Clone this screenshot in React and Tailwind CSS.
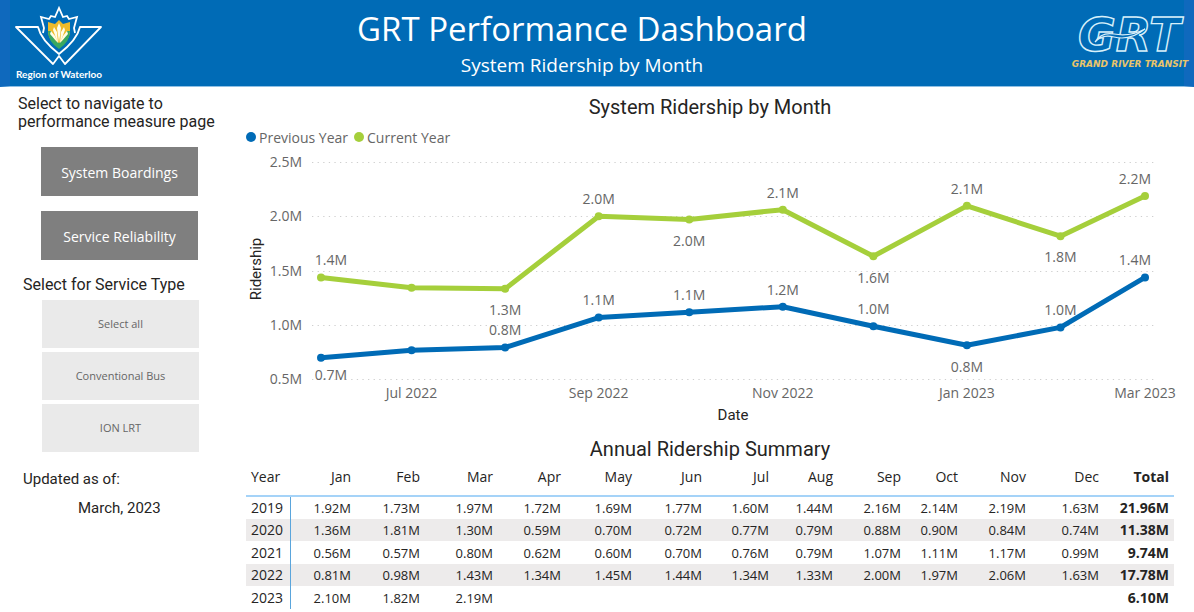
const segoe = "font-['Open_Sans','Noto_Sans',sans-serif]";
const din = "font-[Roboto,'Liberation_Sans',sans-serif]";

const months = ['Jan', 'Feb', 'Mar', 'Apr', 'May', 'Jun', 'Jul', 'Aug', 'Sep', 'Oct', 'Nov', 'Dec'];
const columnWidths = [44, 66, 69, 73, 68, 71, 70, 67, 64, 68, 57, 68, 73, 70];

const rows = [
  { year: '2019', values: ['1.92M', '1.73M', '1.97M', '1.72M', '1.69M', '1.77M', '1.60M', '1.44M', '2.16M', '2.14M', '2.19M', '1.63M'], total: '21.96M' },
  { year: '2020', values: ['1.36M', '1.81M', '1.30M', '0.59M', '0.70M', '0.72M', '0.77M', '0.79M', '0.88M', '0.90M', '0.84M', '0.74M'], total: '11.38M' },
  { year: '2021', values: ['0.56M', '0.57M', '0.80M', '0.62M', '0.60M', '0.70M', '0.76M', '0.79M', '1.07M', '1.11M', '1.17M', '0.99M'], total: '9.74M' },
  { year: '2022', values: ['0.81M', '0.98M', '1.43M', '1.34M', '1.45M', '1.44M', '1.34M', '1.33M', '2.00M', '1.97M', '2.06M', '1.63M'], total: '17.78M' },
  { year: '2023', values: ['2.10M', '1.82M', '2.19M', '', '', '', '', '', '', '', '', ''], total: '6.10M' },
];

// Days elapsed since 1 June 2022 for each plotted month.
const days = [0, 30, 61, 92, 122, 153, 183, 214, 245, 273];
const current = [1.445, 1.35, 1.34, 2.01, 1.98, 2.07, 1.64, 2.105, 1.825, 2.195];
const previous = [0.705, 0.775, 0.8, 1.075, 1.125, 1.175, 0.995, 0.82, 0.985, 1.445];

const px = (day) => 75 + (day * 824) / 273;
const py = (value) => 230 - (value - 0.5) * 108.5;

// [point index, text, baseline y, x shift]
const currentLabels = [
  [0, '1.4M', 115, 10], [2, '1.3M', 165, 0], [3, '2.0M', 54, 0], [4, '2.0M', 96, 0], [5, '2.1M', 48, 0],
  [6, '1.6M', 133, 0], [7, '2.1M', 44, 0], [8, '1.8M', 112, 0], [9, '2.2M', 34, -10],
];
const previousLabels = [
  [0, '0.7M', 230, 10], [2, '0.8M', 185, 0], [3, '1.1M', 155, 0], [4, '1.1M', 150, 0], [5, '1.2M', 145, 0],
  [6, '1.0M', 164, 0], [7, '0.8M', 222, 0], [8, '1.0M', 165, 0], [9, '1.4M', 115, -10],
];
const axisDates = [[1, 'Jul 2022'], [3, 'Sep 2022'], [5, 'Nov 2022'], [7, 'Jan 2023'], [9, 'Mar 2023']];

function Series({ values, color }) {
  return (
    <g>
      <polyline
        fill="none"
        stroke={color}
        strokeWidth="5"
        strokeLinejoin="round"
        points={values.map((v, i) => `${px(days[i])},${py(v)}`).join(' ')}
      />
      {values.map((v, i) => (
        <circle key={i} cx={px(days[i])} cy={py(v)} r="4" fill={color} />
      ))}
    </g>
  );
}

function RidershipChart() {
  return (
    <svg viewBox="0 0 928 274" className={`block w-full overflow-visible ${segoe}`} role="img" aria-label="System Ridership by Month">
      {[2.5, 2.0, 1.5, 1.0, 0.5].map((v) => (
        <g key={v}>
          <line x1="66" x2="910" y1={Math.round(py(v)) - 0.5} y2={Math.round(py(v)) - 0.5} stroke="#cfcfcf" strokeDasharray="1.3 4.3" />
          <text x="56" y={Math.round(py(v)) + 4} textAnchor="end" fontSize="14" fill="#666">{v.toFixed(1)}M</text>
        </g>
      ))}
      <Series values={previous} color="#006bb6" />
      <Series values={current} color="#a5cf3b" />
      <g fontSize="14" fill="#666" textAnchor="middle">
        {[...currentLabels, ...previousLabels].map(([i, label, y, dx]) => (
          <text key={`${label}-${i}-${y}`} x={px(days[i]) + dx} y={y}>{label}</text>
        ))}
        {axisDates.map(([i, label]) => (
          <text key={label} x={px(days[i])} y="248">{label}</text>
        ))}
      </g>
      <g className={din} fontSize="15" fill="#252423" textAnchor="middle">
        <text x="487" y="270">Date</text>
        <text transform="translate(15 119) rotate(-90)">Ridership</text>
      </g>
    </svg>
  );
}

function WaterlooLogo() {
  return (
    <svg viewBox="0 0 98 84" className="h-[84px] w-[98px]" role="img" aria-label="Region of Waterloo">
      <path d="M49 18 L53 22 L60 20 L60 31 Q58 40 49 46 Q40 40 38 31 L38 20 L45 22 Z" fill="#eebb2a" />
      <path d="M38 29 L41 29 Q43 38 49 41 Q55 38 57 29 L60 29 Q60 40 49 47 Q38 40 38 29 Z" fill="#3aa860" />
      <path
        d="M49 41 L47 26 L49 21 L51 26 Z M48 41 L43 28 L44 25 L47 30 Z M50 41 L55 28 L54 25 L51 30 Z M48 41 L40 32 L41 29 L45 34 Z M50 41 L58 32 L57 29 L53 34 Z"
        fill="#fffde8"
      />
      <path
        d="M33 31 L34 26 L31 15 L39 17 L41 14 L45 15 L49 6 L53 15 L57 14 L59 17 L67 15 L64 26 L65 31"
        fill="none" stroke="#fff" strokeWidth="1.8"
      />
      <path
        d="M6 25 L28 25 Q31 38 49 52 Q67 38 70 25 L91 25 L55 62 L49 54 L43 62 Z"
        fill="none" stroke="#fff" strokeWidth="1.8" strokeLinejoin="round"
      />
      <text x="49" y="76" textAnchor="middle" fontFamily="Lato, sans-serif" fontWeight="700" fontSize="10" fill="#fff">Region of Waterloo</text>
    </svg>
  );
}

function GrtLogo() {
  return (
    <svg viewBox="0 0 130 64" className="h-16 w-[130px]" role="img" aria-label="Grand River Transit">
      <text
        x="14" y="43" fontFamily="'DejaVu Sans', sans-serif" fontWeight="700" fontStyle="italic" fontSize="46"
        fill="#006bb6" stroke="#d8f0fa" strokeWidth="1.4"
      >
        GRT
      </text>
      <path d="M31 34 Q37 24 50 26 Q66 29 81 21 Q66 33 50 29 Q38 26 31 34 Z" fill="#006bb6" stroke="#d8f0fa" strokeWidth="1.2" />
      <text x="66" y="59" textAnchor="middle" fontFamily="'DejaVu Sans', sans-serif" fontWeight="700" fontStyle="italic" fontSize="9" fill="#e9c46a">GRAND RIVER TRANSIT</text>
    </svg>
  );
}

export default function App() {
  return (
    <div className={`min-h-screen bg-white text-[#252423] ${segoe}`}>
      <header className="flex h-[87px] items-start border-x-10 border-b border-x-[#0f69bd] border-b-[#8fc0e4] bg-[#006bb6] text-white">
        <div className="pt-[2px]"><WaterlooLogo /></div>
        <div className="flex-1 pt-[7px] pr-2 text-center">
          <h1 className="text-[33px] leading-[44px]">GRT Performance Dashboard</h1>
          <p className="text-[19px] leading-[28px]">System Ridership by Month</p>
        </div>
        <div className="-mr-[10px] pt-2"><GrtLogo /></div>
      </header>

      <div className="flex">
        <aside className={`w-[246px] shrink-0 pt-[8px] ${din}`}>
          <p className="pl-[18px] text-[16px] leading-[18px]">Select to navigate to<br />performance measure page</p>
          <nav className={`mt-[16px] ml-[41px] flex w-[157px] flex-col gap-[15px] text-[14px] text-white ${segoe}`}>
            <button className="h-[49px] bg-[#7f7f7f] pt-[2px]">System Boardings</button>
            <button className="h-[49px] bg-[#7f7f7f] pt-[2px]">Service Reliability</button>
          </nav>
          <h2 className="mt-[16px] pl-[23px] text-[16px] leading-[18px]">Select for Service Type</h2>
          <div className={`mt-[6px] ml-[42px] flex w-[157px] flex-col gap-1 text-[11px] text-[#666] ${segoe}`}>
            <button className="h-[48px] bg-[#eaeaea]">Select all</button>
            <button className="h-[48px] bg-[#eaeaea]">Conventional Bus</button>
            <button className="h-[48px] bg-[#eaeaea]">ION LRT</button>
          </div>
          <p className="mt-[18px] pl-[23px] text-[15px] leading-[18px]">Updated as of:</p>
          <p className="mt-[11px] pl-[78px] text-[15px] leading-[18px]">March, 2023</p>
        </aside>

        <main className="min-w-0 flex-1 pt-[8px] pr-5">
          <section>
            <h2 className={`text-center text-[20px] leading-[24px] ${din}`}>System Ridership by Month</h2>
            <ul className="mt-[7px] mb-[2px] flex h-[22px] items-center gap-[6px] text-[14px] text-[#666]">
              <li className="flex items-center gap-[3px]"><span className="size-[10px] rounded-full bg-[#006bb6]" />Previous Year</li>
              <li className="flex items-center gap-[3px]"><span className="size-[10px] rounded-full bg-[#a5cf3b]" />Current Year</li>
            </ul>
            <RidershipChart />
          </section>

          <section className="mt-[13px]">
            <h2 className={`text-center text-[20px] leading-[24px] ${din}`}>Annual Ridership Summary</h2>
            <table className="w-full table-fixed border-collapse text-right text-[13px] leading-[18px]">
              <colgroup>
                {columnWidths.map((w, i) => (
                  <col key={i} style={{ width: `${(w / 928) * 100}%` }} />
                ))}
              </colgroup>
              <thead>
                <tr className="h-[35px] border-b-2 border-[#a5d3f8] text-[14px]">
                  <th scope="col" className="pb-[2px] pl-[5px] text-left font-normal">Year</th>
                  {months.map((m) => (
                    <th key={m} scope="col" className="pr-[5px] pb-[2px] font-normal">{m}</th>
                  ))}
                  <th scope="col" className="pr-[5px] pb-[2px] font-bold">Total</th>
                </tr>
              </thead>
              <tbody>
                {rows.map((row) => (
                  <tr key={row.year} className="h-[23px] even:h-[22px] even:bg-[#edebeb]">
                    <th scope="row" className="border-r border-[#5aa5dc] p-0 pl-[5px] text-left text-[14px] font-normal">{row.year}</th>
                    {row.values.map((value, i) => (
                      <td key={months[i]} className="p-0 pr-[5px]">{value}</td>
                    ))}
                    <td className="p-0 pr-[5px] text-[14px] font-bold">{row.total}</td>
                  </tr>
                ))}
              </tbody>
            </table>
          </section>
        </main>
      </div>
    </div>
  );
}
